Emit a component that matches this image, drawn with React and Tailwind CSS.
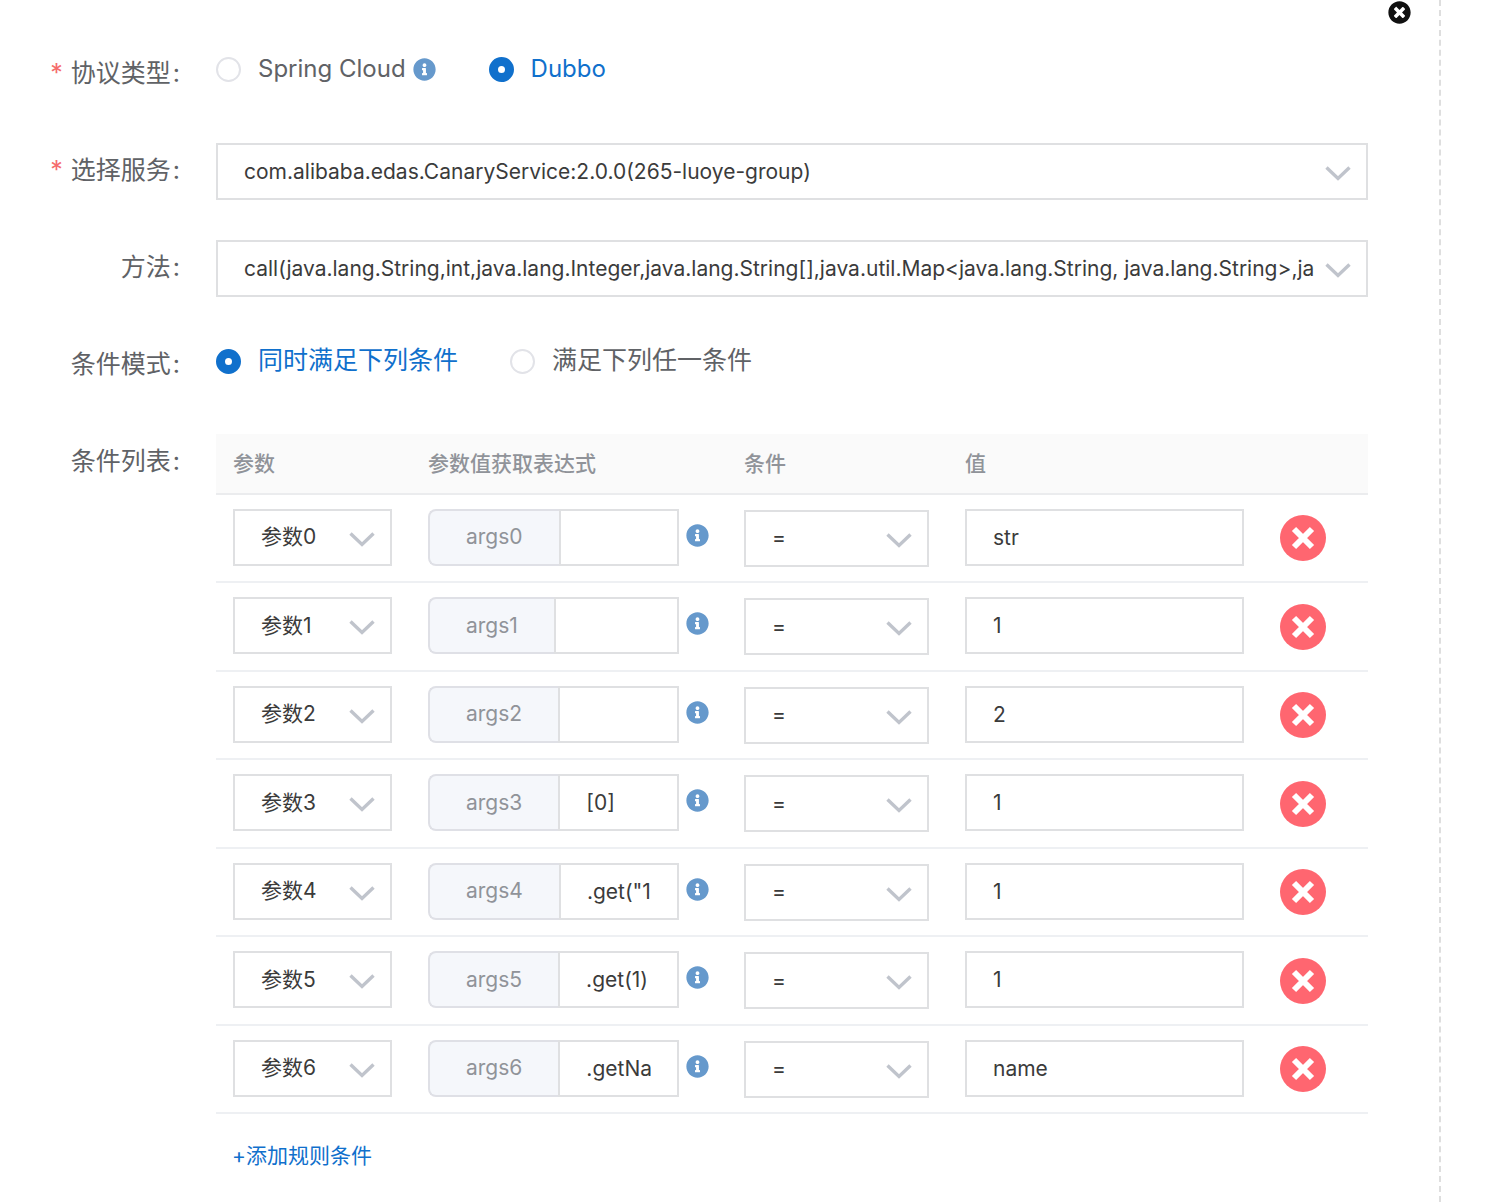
import React, { useState } from 'react';
import { FaInfoCircle, FaTimesCircle } from 'react-icons/fa';

const SERVICES = ['com.alibaba.edas.CanaryService:2.0.0(265-luoye-group)'];
const METHODS = [
  'call(java.lang.String,int,java.lang.Integer,java.lang.String[],java.util.Map<java.lang.String, java.lang.String>,java.util.List<java.lang.String>)',
];
const OPERATORS = ['=', '!=', '>', '<', '>=', '<='];

const initialRows = [
  { param: 0, expr: '', op: '=', value: 'str' },
  { param: 1, expr: '', op: '=', value: '1' },
  { param: 2, expr: '', op: '=', value: '2' },
  { param: 3, expr: '[0]', op: '=', value: '1' },
  { param: 4, expr: '.get("1")', op: '=', value: '1' },
  { param: 5, expr: '.get(1)', op: '=', value: '1' },
  { param: 6, expr: '.getName()', op: '=', value: 'name' },
];

const inputClass =
  'h-[57px] min-w-0 border-2 border-[#dfe0e2] bg-white px-[26px] text-[21px] text-[#3b3b3b] outline-none focus:border-[#1070cc]';

const Select = ({ children, ...props }) => (
  <div className="relative">
    <select
      {...props}
      className="block h-[57px] w-full appearance-none border-2 border-[#dfe0e2] bg-white pr-[52px] pl-[26px] text-[21px] text-[#3b3b3b] outline-none focus:border-[#1070cc]"
    >
      {children}
    </select>
    <svg
      viewBox="0 0 26 16"
      className="pointer-events-none absolute top-[23px] right-[17px] h-4 w-[26px]"
      fill="none"
      stroke="#c0c4cc"
      strokeWidth="3.4"
    >
      <path d="M1.5 1.5 13 12.5 24.5 1.5" />
    </svg>
  </div>
);

const Radio = ({ label, children, ...props }) => (
  <div className="flex items-center">
    <label className="flex cursor-pointer items-center gap-[17px]">
      <input
        type="radio"
        {...props}
        className="peer size-[25px] appearance-none rounded-full border-2 border-[#e2e3e8] bg-white checked:border-[9px] checked:border-[#1070cc]"
      />
      <span className="text-[#606266] peer-checked:text-[#1070cc]">{label}</span>
    </label>
    {children}
  </div>
);

const FormItem = ({ label, htmlFor, required, children }) => (
  <div className="flex">
    <div className="w-[216px] shrink-0 pr-9 text-right leading-[54px] text-[#606266]">
      {required && <span className="mr-2 text-[#f56c6c]">*</span>}
      <label htmlFor={htmlFor}>
        {label}
        <span className="ml-0.5">:</span>
      </label>
    </div>
    <div className="min-h-[57px] min-w-0 flex-1">{children}</div>
  </div>
);

const App = () => {
  const [protocol, setProtocol] = useState('dubbo');
  const [mode, setMode] = useState('all');
  const [rows, setRows] = useState(initialRows);

  const updateRow = (index, patch) =>
    setRows(rows.map((row, i) => (i === index ? { ...row, ...patch } : row)));
  const removeRow = (index) => setRows(rows.filter((_, i) => i !== index));
  const addRow = () => setRows([...rows, { param: 0, expr: '', op: '=', value: '' }]);

  return (
    <div className="min-h-screen bg-white pr-[51px] font-['Inter','Noto_Sans_CJK_SC',sans-serif] text-[25px]">
      <form
        onSubmit={(e) => e.preventDefault()}
        className="relative flex min-h-screen flex-col gap-10 border-r-2 border-dashed border-[#dedede] pt-[46px] pr-[71px]"
      >
        <button type="button" aria-label="关闭" className="absolute top-px right-7 text-[#111]">
          <FaTimesCircle size={23} />
        </button>

        <FormItem label="协议类型" required>
          <div className="flex h-[46px] items-center gap-[53px] text-[24px]">
            <Radio
              name="protocol"
              label="Spring Cloud"
              checked={protocol === 'spring'}
              onChange={() => setProtocol('spring')}
            >
              <FaInfoCircle size={23} className="ml-[7px] text-[#6699cc]" />
            </Radio>
            <Radio
              name="protocol"
              label="Dubbo"
              checked={protocol === 'dubbo'}
              onChange={() => setProtocol('dubbo')}
            />
          </div>
        </FormItem>

        <FormItem label="选择服务" htmlFor="service" required>
          <Select id="service">
            {SERVICES.map((s) => (
              <option key={s}>{s}</option>
            ))}
          </Select>
        </FormItem>

        <FormItem label="方法" htmlFor="method">
          <Select id="method">
            {METHODS.map((m) => (
              <option key={m}>{m}</option>
            ))}
          </Select>
        </FormItem>

        <FormItem label="条件模式">
          <div className="flex h-[48px] items-center gap-[52px]">
            <Radio
              name="mode"
              label="同时满足下列条件"
              checked={mode === 'all'}
              onChange={() => setMode('all')}
            />
            <Radio
              name="mode"
              label="满足下列任一条件"
              checked={mode === 'any'}
              onChange={() => setMode('any')}
            />
          </div>
        </FormItem>

        <FormItem label="条件列表">
          <table className="w-full table-fixed text-[21px]">
            <thead>
              <tr className="h-[60px] border-b-2 border-[#ebecee] bg-[#fafafa] text-left text-[#909399]">
                <th className="w-[195px] px-[17px] font-medium">参数</th>
                <th className="w-[316px] px-[17px] font-medium">参数值获取表达式</th>
                <th className="w-[221px] px-[17px] font-medium">条件</th>
                <th className="px-[17px] font-medium">值</th>
                <th className="w-[105px]" />
              </tr>
            </thead>
            <tbody>
              {rows.map((row, index) => (
                <tr key={index} className="h-[88px] border-b-2 border-[#eef0f3] even:h-[89px]">
                  <td className="pr-[19px] pb-0.5 pl-[17px]">
                    <Select
                      aria-label="参数"
                      value={row.param}
                      onChange={(e) => updateRow(index, { param: Number(e.target.value) })}
                    >
                      {initialRows.map(({ param }) => (
                        <option key={param} value={param}>
                          参数{param}
                        </option>
                      ))}
                    </Select>
                  </td>
                  <td className="pb-0.5 pl-[17px]">
                    <div className="flex items-center">
                      <div className="flex w-[251px]">
                        <label
                          htmlFor={`expr-${index}`}
                          className="flex h-[57px] items-center rounded-l-lg border-2 border-r-0 border-[#dfe0e6] bg-[#f5f7fb] px-9 text-[#909399]"
                        >
                          args{row.param}
                        </label>
                        <input
                          id={`expr-${index}`}
                          type="text"
                          value={row.expr}
                          onChange={(e) => updateRow(index, { expr: e.target.value })}
                          className={`${inputClass} flex-1`}
                        />
                      </div>
                      <FaInfoCircle size={23} className="mb-1 ml-[7px] text-[#6699cc]" />
                    </div>
                  </td>
                  <td className="pr-[19px] pl-[17px]">
                    <Select
                      aria-label="条件"
                      value={row.op}
                      onChange={(e) => updateRow(index, { op: e.target.value })}
                    >
                      {OPERATORS.map((op) => (
                        <option key={op}>{op}</option>
                      ))}
                    </Select>
                  </td>
                  <td className="pr-[19px] pb-0.5 pl-[17px]">
                    <input
                      type="text"
                      aria-label="值"
                      value={row.value}
                      onChange={(e) => updateRow(index, { value: e.target.value })}
                      className={`${inputClass} block w-full`}
                    />
                  </td>
                  <td className="pl-[17px]">
                    <button
                      type="button"
                      aria-label="删除"
                      onClick={() => removeRow(index)}
                      className="flex size-[46px] items-center justify-center rounded-full bg-[#ff6670]"
                    >
                      <svg viewBox="0 0 24 24" className="size-6" stroke="#fff" strokeWidth="6">
                        <path d="M3 3 21 21M21 3 3 21" />
                      </svg>
                    </button>
                  </td>
                </tr>
              ))}
            </tbody>
          </table>
          <button
            type="button"
            onClick={addRow}
            className="mt-6 ml-4 text-[21px] leading-9 text-[#1070cc]"
          >
            +添加规则条件
          </button>
        </FormItem>
      </form>
    </div>
  );
};

export default App;
